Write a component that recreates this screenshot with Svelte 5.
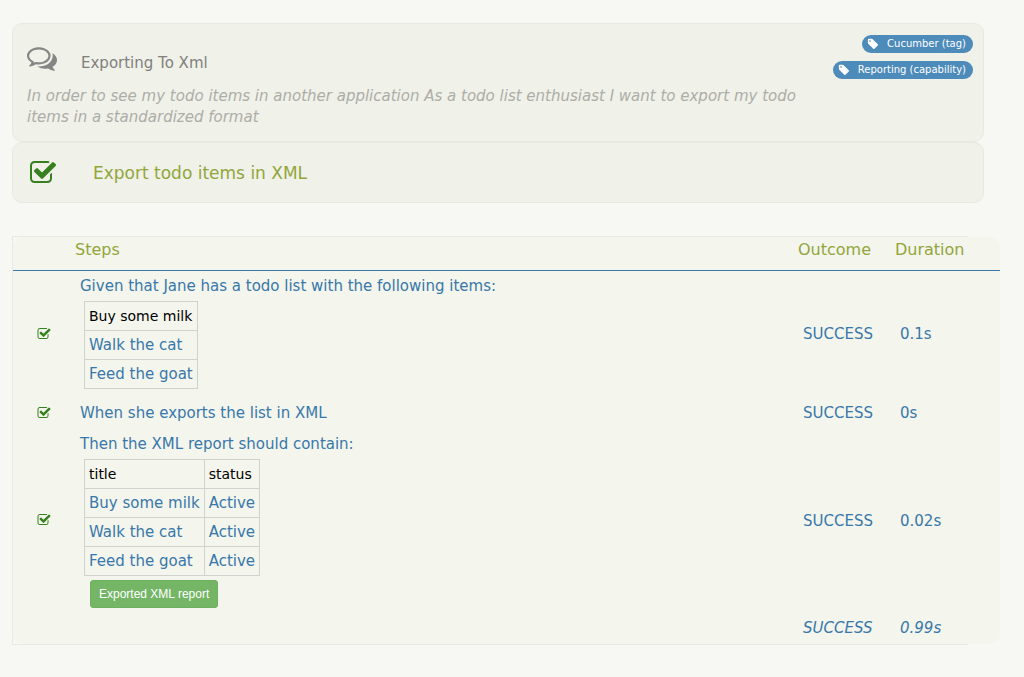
<script lang="ts">
	interface DataTable {
		headers: string[];
		rows: string[][];
	}

	interface Step {
		text: string;
		outcome: string;
		duration: string;
		data?: DataTable;
		report?: string;
	}

	const tags: string[] = ['Cucumber (tag)', 'Reporting (capability)'];

	const steps: Step[] = [
		{
			text: 'Given that Jane has a todo list with the following items:',
			outcome: 'SUCCESS',
			duration: '0.1s',
			data: {
				headers: ['Buy some milk'],
				rows: [['Walk the cat'], ['Feed the goat']]
			}
		},
		{
			text: 'When she exports the list in XML',
			outcome: 'SUCCESS',
			duration: '0s'
		},
		{
			text: 'Then the XML report should contain:',
			outcome: 'SUCCESS',
			duration: '0.02s',
			data: {
				headers: ['title', 'status'],
				rows: [
					['Buy some milk', 'Active'],
					['Walk the cat', 'Active'],
					['Feed the goat', 'Active']
				]
			},
			report: 'Exported XML report'
		}
	];
</script>

{#snippet checkIcon(size: number)}
	<svg class="check" width={size} height={size} viewBox="0 0 1792 1792" aria-hidden="true">
		<path
			d="M1472 930v318q0 119-84.5 203.5t-203.5 84.5h-832q-119 0-203.5-84.5t-84.5-203.5v-832q0-119 84.5-203.5t203.5-84.5h832q63 0 117 25 15 7 18 23 3 17-9 29l-49 49q-10 10-23 10-3 0-9-2-23-6-45-6h-832q-66 0-113 47t-47 113v832q0 66 47 113t113 47h832q66 0 113-47t47-113v-254q0-13 9-22l64-64q10-10 23-10 6 0 12 3 20 8 20 29zm231-489l-814 814q-24 24-57 24t-57-24l-430-430q-24-24-24-57t24-57l110-110q24-24 57-24t57 24l263 263 647-647q24-24 57-24t57 24l110 110q24 24 24 57t-24 57z"
		/>
	</svg>
{/snippet}

<main class="report">
	<section class="card feature">
		<div class="feature-text">
			<div class="feature-header">
				<svg class="comments" width="30" height="30" viewBox="0 0 1792 1792" aria-hidden="true">
					<path
						d="M704 384q-153 0-286 52t-211.5 141-78.5 191q0 82 53 158t149 132l97 56-35 84q34-20 62-39l44-31 53 10q78 14 153 14 153 0 286-52t211.5-141 78.5-191-78.5-191-211.5-141-286-52zm0-128q191 0 353.5 68.5t256.5 186.5 94 257-94 257-256.5 186.5-353.5 68.5q-86 0-176-16-124 88-278 128-36 9-86 16h-3q-11 0-20.5-8t-11.5-21q-1-3-1-6.5t.5-6.5 2-6l2.5-5 3.5-5.5 4-5 4.5-5 4-4.5q5-6 23-25t26-29.5 22.5-29 25-38.5 20.5-44q-124-72-195-177t-71-224q0-139 94-257t256.5-186.5 353.5-68.5zm822 1169q10 24 20.5 44t25 38.5 22.5 29 26 29.5 23 25q1 1 4 4.5t4.5 5 4 5 3.5 5.5l2.5 5 2 6 .5 6.5-1 6.5q-3 14-13 22t-22 7q-50-7-86-16-154-40-278-128-90 16-176 16-271 0-472-132 58 4 88 4 161 0 309-45t264-129q125-92 192-212t67-254q0-77-23-152 129 71 204 178t75 230q0 120-71 224.5t-195 176.5z"
					/>
				</svg>
				<h3>Exporting To Xml</h3>
			</div>
			<p>
				In order to see my todo items in another application As a todo list enthusiast I want to
				export my todo items in a standardized format
			</p>
		</div>
		<div class="tags">
			{#each tags as tag}
				<a class="tag" href="#tag">
					<svg width="12" height="12" viewBox="0 0 1792 1792" aria-hidden="true">
						<path
							d="M576 448q0-53-37.5-90.5t-90.5-37.5-90.5 37.5-37.5 90.5 37.5 90.5 90.5 37.5 90.5-37.5 37.5-90.5zm1067 576q0 53-37 90l-491 492q-39 37-91 37-53 0-90-37l-715-716q-38-37-64.5-101t-26.5-117v-416q0-52 38-90t90-38h416q53 0 117 26.5t102 64.5l715 714q37 39 37 91z"
						/>
					</svg>
					{tag}
				</a>
			{/each}
		</div>
	</section>

	<section class="card scenario">
		{@render checkIcon(28)}
		<h2>Export todo items in XML</h2>
	</section>

	<section class="steps">
		<div class="steps-panel">
			<table class="step-table">
				<thead>
					<tr>
						<th class="icon-column" aria-label="Result"></th>
						<th>Steps</th>
						<th class="outcome-column">Outcome</th>
						<th class="duration-column">Duration</th>
					</tr>
				</thead>
				<tbody>
					{#each steps as step}
						<tr>
							<td class="step-icon">{@render checkIcon(14)}</td>
							<td>
								<div>{step.text}</div>
								{#if step.data}
									<table class="data-table">
										<thead>
											<tr>
												{#each step.data.headers as header}
													<th>{header}</th>
												{/each}
											</tr>
										</thead>
										<tbody>
											{#each step.data.rows as row}
												<tr>
													{#each row as cell}
														<td>{cell}</td>
													{/each}
												</tr>
											{/each}
										</tbody>
									</table>
								{/if}
								{#if step.report}
									<button type="button">{step.report}</button>
								{/if}
							</td>
							<td>{step.outcome}</td>
							<td>{step.duration}</td>
						</tr>
					{/each}
					<tr class="total">
						<td></td>
						<td></td>
						<td>SUCCESS</td>
						<td>0.99s</td>
					</tr>
				</tbody>
			</table>
		</div>
	</section>
</main>

<style>
	:global(body) {
		margin: 0;
		background: #f7f8f3;
	}

	.report {
		padding: 23px 24px 32px 12px;
		font-family: Verdana, 'DejaVu Sans', sans-serif;
		font-size: 15px;
		line-height: 21px;
		color: #3878aa;
	}

	h2,
	h3,
	p {
		margin: 0;
		font-weight: normal;
	}

	.card {
		box-sizing: border-box;
		display: flex;
		margin-right: 16px;
		border: 1px solid #e8e9e2;
		border-radius: 10px;
		background: #f0f1e8;
	}

	.feature {
		justify-content: space-between;
		gap: 24px;
		padding: 11px 10px 13px 14px;
	}

	.feature-text {
		max-width: 780px;
		padding-top: 8px;
	}

	.feature-header {
		display: flex;
		align-items: flex-start;
		gap: 24px;
		height: 43px;
	}

	.feature-header h3 {
		padding-top: 10px;
		font-size: 15px;
		color: #7f807d;
	}

	.comments {
		fill: #858585;
	}

	.feature p {
		font-style: italic;
		color: #adada9;
	}

	.tags {
		display: flex;
		flex-direction: column;
		align-items: flex-end;
		flex-shrink: 0;
		gap: 8px;
	}

	.tag {
		display: flex;
		align-items: center;
		gap: 8px;
		padding: 0 7px 0 5px;
		border-radius: 9px;
		background: #4d8bba;
		font-size: 10px;
		line-height: 18px;
		color: #fff;
		text-decoration: none;
	}

	.tag svg {
		fill: currentColor;
	}

	.check {
		display: block;
		fill: #36801f;
	}

	.scenario {
		align-items: center;
		gap: 36px;
		padding: 16px 16px 15px;
	}

	.scenario h2 {
		font-size: 17px;
		line-height: 28px;
		color: #91a63b;
	}

	/* The panel reaches past the right end of its outline */
	.steps {
		margin: 33px 32px 0 0;
		border: solid #e9eae5;
		border-width: 1px 0 1px 1px;
	}

	.steps-panel {
		margin-right: -32px;
		border-radius: 10px;
		background: #f4f5ec;
	}

	.step-table {
		width: 100%;
		border-spacing: 0;
	}

	.step-table > thead th {
		padding: 2px 0 10px;
		border-bottom: 1px solid #3878aa;
		font-size: 16px;
		font-weight: normal;
		text-align: left;
		color: #91a63b;
	}

	.icon-column {
		width: 62px;
	}

	.outcome-column {
		width: 97px;
	}

	.duration-column {
		width: 105px;
	}

	.step-table > tbody > tr > td {
		padding: 5px;
		vertical-align: middle;
	}

	.step-table > tbody > tr > .step-icon {
		padding: 3px 5px 5px 24px;
	}

	.data-table {
		margin: 4px;
		border-collapse: collapse;
	}

	.data-table th,
	.data-table td {
		padding: 4px;
		border: 1px solid #d0d2d0;
		line-height: 20px;
		text-align: left;
	}

	.data-table th {
		font-size: 14px;
		font-weight: normal;
		color: #000;
	}

	button {
		display: block;
		margin-left: 10px;
		padding: 5px 8px;
		border: 1px solid #6db160;
		border-radius: 3px;
		background: #74b566;
		font-family: 'Liberation Sans', Arial, sans-serif;
		font-size: 12px;
		line-height: 16px;
		color: #fff;
		cursor: pointer;
	}

	.total {
		font-style: italic;
	}
</style>
